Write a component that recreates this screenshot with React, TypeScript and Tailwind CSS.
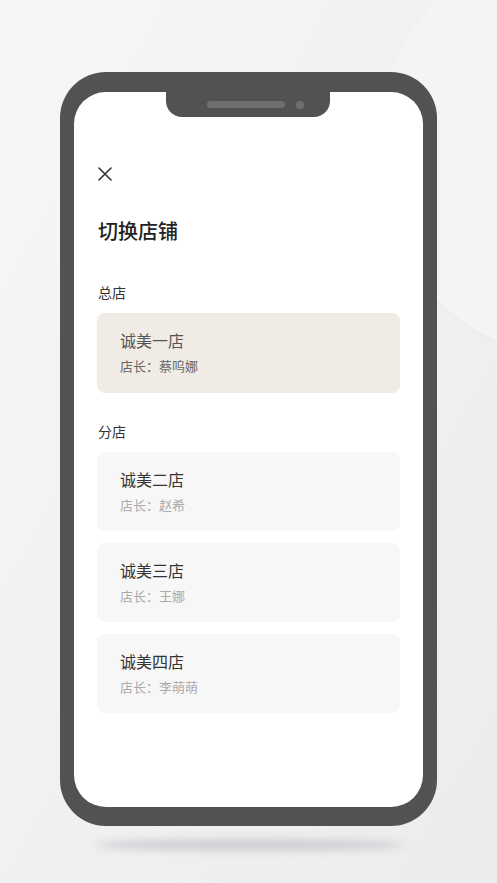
import React from "react";

const STORES = [
  { name: "诚美二店", owner: "赵希" },
  { name: "诚美三店", owner: "王娜" },
  { name: "诚美四店", owner: "李萌萌" },
];

const FONT = "font-['Noto_Sans_CJK_SC','Noto_Sans',sans-serif]";

export default function App() {
  return (
    <div className={`relative h-[883px] w-full overflow-hidden bg-gradient-to-br from-[#f7f7f7] via-[#f1f1f1] to-[#ececec] ${FONT}`}>
      {/* soft arc in the backdrop */}
      <div className="pointer-events-none absolute left-[374px] top-[-60px] h-[420px] w-[420px] rounded-full bg-[#f4f4f4] shadow-[-1px_1px_4px_rgba(0,0,0,0.02)]" />

      <div className="relative flex flex-col items-center pt-[72px]">
        {/* phone */}
        <div className="relative w-[377px] rounded-[46px] bg-[#525252] px-[14px] pb-[19px] pt-[20px]">
          <div className="relative h-[715px] rounded-[32px] bg-white pl-[23px] pr-6">
            {/* notch */}
            <div className="absolute left-[92px] top-0 flex h-[25px] w-[164px] items-center gap-[11px] rounded-b-[16px] bg-[#525252] pl-[41px]">
              <span className="h-[7px] w-[78px] rounded-full bg-[#6f6f6f]" />
              <span className="h-[8px] w-[8px] rounded-full bg-[#6f6f6f]" />
            </div>

            <div className="pt-[75px] pl-[1px]">
              <svg width="14" height="14" viewBox="0 0 14 14" className="block">
                <path d="M1 1 L13 13 M13 1 L1 13" stroke="#333" strokeWidth="1.6" strokeLinecap="round" />
              </svg>
            </div>

            <h1 className="mt-[36px] pl-[1px] text-[20px] font-medium leading-[28px] text-[#222]">切换店铺</h1>

            <div className="mt-[37px] pl-[1px] text-[14px] leading-[20px] text-[#333]">总店</div>
            <div className="mt-[11px] flex h-[80px] w-[303px] flex-col rounded-[8px] bg-[#f0ebe4] px-[23px] pt-[16px]">
              <div className="text-[16px] leading-[22px] text-[#555]">诚美一店</div>
              <div className="mt-[6px] text-[13px] leading-[18px] text-[#666]">店长：蔡呜娜</div>
            </div>

            <div className="mt-[28px] pl-[1px] text-[14px] leading-[20px] text-[#333]">分店</div>
            <div className="mt-[11px] flex flex-col gap-[12px]">
              {STORES.map((s) => (
                <div key={s.name} className="flex h-[79px] w-[303px] flex-col rounded-[8px] bg-[#f7f7f7] px-[23px] pt-[16px]">
                  <div className="text-[16px] leading-[22px] text-[#333]">{s.name}</div>
                  <div className="mt-[6px] text-[13px] leading-[18px] text-[#aaa]">店长：{s.owner}</div>
                </div>
              ))}
            </div>
          </div>
        </div>

        {/* floor shadow */}
        <div className="mt-[14px] h-[10px] w-[310px] rounded-[50%] bg-[#c9c9d0] blur-[4px]" />
      </div>
    </div>
  );
}
